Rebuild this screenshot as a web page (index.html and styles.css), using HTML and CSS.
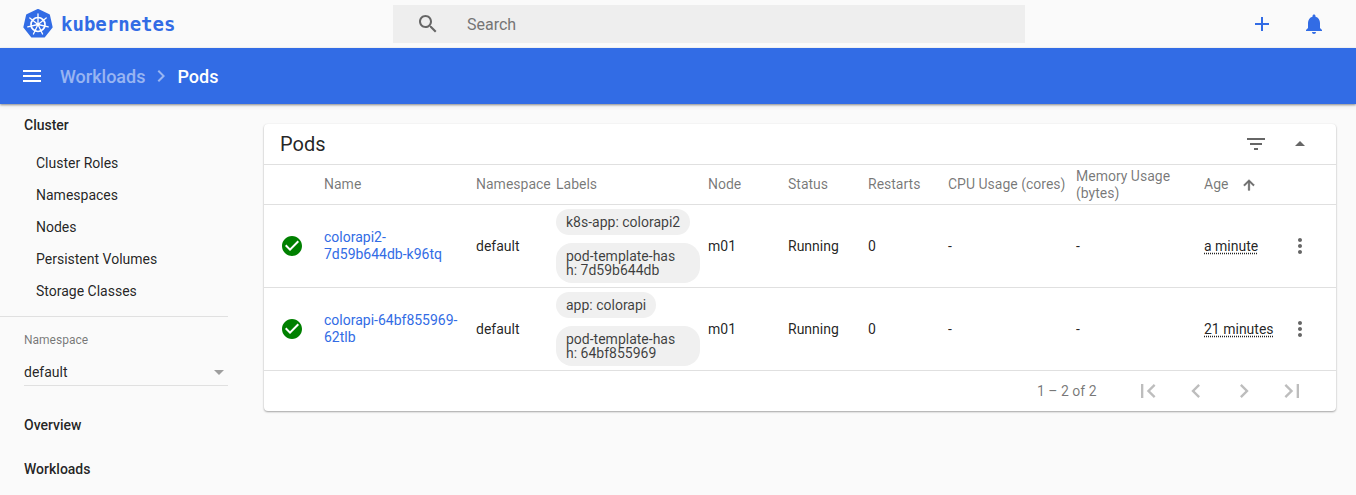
FILE: index.html
```html
<!DOCTYPE html>
<html lang="en">
<head>
    <meta charset="UTF-8">
    <meta name="viewport" content="width=device-width, initial-scale=1.0">
    <title>Pods - Kubernetes Dashboard</title>
    <link rel="stylesheet" href="styles.css">
</head>
<body>
    <svg class="sprites" xmlns="http://www.w3.org/2000/svg">
        <symbol id="i-search" viewBox="0 0 24 24"><path d="M15.5 14h-.79l-.28-.27C15.41 12.59 16 11.11 16 9.5 16 5.91 13.09 3 9.5 3S3 5.91 3 9.5 5.91 16 9.5 16c1.61 0 3.09-.59 4.23-1.57l.27.28v.79l5 4.99L20.49 19l-4.99-5zm-6 0C7.01 14 5 11.99 5 9.5S7.01 5 9.5 5 14 7.01 14 9.5 11.99 14 9.5 14z"/></symbol>
        <symbol id="i-add" viewBox="0 0 24 24"><path d="M19 13h-6v6h-2v-6H5v-2h6V5h2v6h6v2z"/></symbol>
        <symbol id="i-bell" viewBox="0 0 24 24"><path d="M12 22c1.1 0 2-.9 2-2h-4c0 1.1.89 2 2 2zm6-6v-5c0-3.07-1.64-5.64-4.5-6.32V4c0-.83-.67-1.5-1.5-1.5s-1.5.67-1.5 1.5v.68C7.63 5.36 6 7.92 6 11v5l-2 2v1h16v-1l-2-2z"/></symbol>
        <symbol id="i-menu" viewBox="0 0 24 24"><path d="M3 18h18v-2H3v2zm0-5h18v-2H3v2zm0-7v2h18V6H3z"/></symbol>
        <symbol id="i-filter" viewBox="0 0 24 24"><path d="M10 18h4v-2h-4v2zM3 6v2h18V6H3zm3 7h12v-2H6v2z"/></symbol>
        <symbol id="i-drop-up" viewBox="0 0 24 24"><path d="M7 14l5-5 5 5z"/></symbol>
        <symbol id="i-check" viewBox="0 0 24 24"><path d="M12 2C6.48 2 2 6.48 2 12s4.48 10 10 10 10-4.48 10-10S17.52 2 12 2zm-2 15l-5-5 1.41-1.41L10 14.17l7.59-7.59L19 8l-9 9z"/></symbol>
        <symbol id="i-more" viewBox="0 0 24 24"><path d="M12 8c1.1 0 2-.9 2-2s-.9-2-2-2-2 .9-2 2 .9 2 2 2zm0 2c-1.1 0-2 .9-2 2s.9 2 2 2 2-.9 2-2-.9-2-2-2zm0 6c-1.1 0-2 .9-2 2s.9 2 2 2 2-.9 2-2-.9-2-2-2z"/></symbol>
        <symbol id="i-first" viewBox="0 0 24 24"><path d="M18.41 16.59L13.82 12l4.59-4.59L17 6l-6 6 6 6zM6 6h2v12H6z"/></symbol>
        <symbol id="i-prev" viewBox="0 0 24 24"><path d="M15.41 7.41L14 6l-6 6 6 6 1.41-1.41L10.83 12z"/></symbol>
        <symbol id="i-next" viewBox="0 0 24 24"><path d="M10 6L8.59 7.41 13.17 12l-4.58 4.59L10 18l6-6z"/></symbol>
        <symbol id="i-last" viewBox="0 0 24 24"><path d="M5.59 7.41L10.18 12l-4.59 4.59L7 18l6-6-6-6zM16 6h2v12h-2z"/></symbol>
        <symbol id="i-up" viewBox="0 0 24 24"><path d="M4 12l1.41 1.41L11 7.83V20h2V7.83l5.58 5.59L20 12l-8-8-8 8z"/></symbol>
    </svg>

    <header class="toolbar">
        <div class="brand">
            <svg class="logo" viewBox="0 0 32 32">
                <polygon class="logo-bg" points="16,2 26.95,7.27 29.65,19.12 22.07,28.61 9.93,28.61 2.35,19.12 5.05,7.27"/>
                <circle class="logo-ring" cx="16" cy="16.5" r="7"/>
                <circle class="logo-hub" cx="16" cy="16.5" r="1.7"/>
                <g class="logo-spokes">
                    <line x1="16" y1="16.5" x2="16" y2="6"/>
                    <line x1="16" y1="16.5" x2="16" y2="6" transform="rotate(51.4 16 16.5)"/>
                    <line x1="16" y1="16.5" x2="16" y2="6" transform="rotate(102.9 16 16.5)"/>
                    <line x1="16" y1="16.5" x2="16" y2="6" transform="rotate(154.3 16 16.5)"/>
                    <line x1="16" y1="16.5" x2="16" y2="6" transform="rotate(205.7 16 16.5)"/>
                    <line x1="16" y1="16.5" x2="16" y2="6" transform="rotate(257.1 16 16.5)"/>
                    <line x1="16" y1="16.5" x2="16" y2="6" transform="rotate(308.6 16 16.5)"/>
                </g>
            </svg>
            <span class="brand-name">kubernetes</span>
        </div>
        <div class="search">
            <svg class="icon search-icon"><use href="#i-search"/></svg>
            <span class="search-text">Search</span>
        </div>
        <div class="toolbar-actions">
            <svg class="icon"><use href="#i-add"/></svg>
            <svg class="icon"><use href="#i-bell"/></svg>
        </div>
    </header>

    <div class="actionbar">
        <svg class="icon menu-icon"><use href="#i-menu"/></svg>
        <span class="crumb">Workloads</span>
        <svg class="icon crumb-sep"><use href="#i-next"/></svg>
        <span class="crumb crumb-current">Pods</span>
    </div>

    <div class="layout">
        <nav class="sidebar">
            <div class="nav-title nav-title-first">Cluster</div>
            <a class="nav-item">Cluster Roles</a>
            <a class="nav-item">Namespaces</a>
            <a class="nav-item">Nodes</a>
            <a class="nav-item">Persistent Volumes</a>
            <a class="nav-item">Storage Classes</a>
            <hr class="nav-divider">
            <div class="ns-label">Namespace</div>
            <div class="ns-select">
                <span>default</span>
                <span class="ns-arrow"></span>
            </div>
            <div class="nav-title">Overview</div>
            <div class="nav-title">Workloads</div>
        </nav>

        <main class="content">
            <section class="card">
                <div class="card-title">
                    <h1>Pods</h1>
                    <svg class="icon filter-icon"><use href="#i-filter"/></svg>
                    <svg class="icon collapse-icon"><use href="#i-drop-up"/></svg>
                </div>
                <table class="pods">
                    <colgroup>
                        <col class="c-state"><col class="c-name"><col class="c-ns"><col class="c-labels"><col class="c-node">
                        <col class="c-status"><col class="c-restarts"><col class="c-cpu"><col class="c-mem"><col class="c-age"><col class="c-menu">
                    </colgroup>
                    <thead>
                        <tr>
                            <th></th>
                            <th>Name</th>
                            <th>Namespace</th>
                            <th>Labels</th>
                            <th>Node</th>
                            <th>Status</th>
                            <th>Restarts</th>
                            <th>CPU Usage (cores)</th>
                            <th>Memory Usage (bytes)</th>
                            <th><span class="sorted">Age <svg class="icon sort-icon"><use href="#i-up"/></svg></span></th>
                            <th></th>
                        </tr>
                    </thead>
                    <tbody>
                        <tr>
                            <td class="state"><svg class="icon check-icon"><use href="#i-check"/></svg></td>
                            <td><a class="pod-link">colorapi2-7d59b644db-k96tq</a></td>
                            <td>default</td>
                            <td>
                                <span class="chip">k8s-app: colorapi2</span>
                                <span class="chip chip-long">pod-template-hash: 7d59b644db</span>
                            </td>
                            <td>m01</td>
                            <td>Running</td>
                            <td>0</td>
                            <td>-</td>
                            <td>-</td>
                            <td><span class="age">a minute</span></td>
                            <td class="row-menu"><svg class="icon more-icon"><use href="#i-more"/></svg></td>
                        </tr>
                        <tr>
                            <td class="state"><svg class="icon check-icon"><use href="#i-check"/></svg></td>
                            <td><a class="pod-link">colorapi-64bf855969-62tlb</a></td>
                            <td>default</td>
                            <td>
                                <span class="chip">app: colorapi</span>
                                <span class="chip chip-long">pod-template-hash: 64bf855969</span>
                            </td>
                            <td>m01</td>
                            <td>Running</td>
                            <td>0</td>
                            <td>-</td>
                            <td>-</td>
                            <td><span class="age">21 minutes</span></td>
                            <td class="row-menu"><svg class="icon more-icon"><use href="#i-more"/></svg></td>
                        </tr>
                    </tbody>
                </table>
                <div class="pager">
                    <span class="pager-range">1 – 2 of 2</span>
                    <svg class="icon pager-icon"><use href="#i-first"/></svg>
                    <svg class="icon pager-icon"><use href="#i-prev"/></svg>
                    <svg class="icon pager-icon"><use href="#i-next"/></svg>
                    <svg class="icon pager-icon"><use href="#i-last"/></svg>
                </div>
            </section>
        </main>
    </div>
</body>
</html>
```

FILE: styles.css
```css
* {
    box-sizing: border-box;
}
html, body {
    height: 100%;
}
body {
    margin: 0;
    overflow: hidden;
    background-color: #fafafa;
    color: rgba(0, 0, 0, 0.87);
    font-family: Roboto, "Liberation Sans", sans-serif;
    font-size: 14px;
}
.sprites {
    display: none;
}
.icon {
    display: block;
    width: 24px;
    height: 24px;
    flex: none;
    fill: currentColor;
}

/* top toolbar */
.toolbar {
    display: flex;
    align-items: center;
    height: 48px;
    padding: 0 30px 0 22px;
}
.brand {
    display: flex;
    align-items: center;
    width: 371px;
}
.logo {
    width: 32px;
    height: 32px;
    margin-right: 7px;
}
.logo-bg {
    fill: #326ce5;
    stroke: #326ce5;
    stroke-width: 2;
    stroke-linejoin: round;
}
.logo-ring {
    fill: none;
    stroke: #fff;
    stroke-width: 1.7;
}
.logo-hub {
    fill: #fff;
}
.logo-spokes line {
    stroke: #fff;
    stroke-width: 1.3;
    stroke-linecap: round;
}
.brand-name {
    color: #326ce5;
    font-family: "DejaVu Sans Mono", "Liberation Mono", monospace;
    font-size: 19px;
    font-weight: 700;
}
.search {
    display: flex;
    align-items: center;
    width: 632px;
    height: 38px;
    padding-left: 23px;
    background-color: #eee;
}
.search-icon {
    color: #666;
}
.search-text {
    margin-left: 27px;
    color: #757575;
    font-size: 16px;
}
.toolbar-actions {
    display: flex;
    gap: 28px;
    margin-left: auto;
    color: #326ce5;
}

/* blue bar */
.actionbar {
    position: relative;
    display: flex;
    align-items: center;
    height: 56px;
    padding-left: 20px;
    background-color: #326ce5;
    box-shadow: 0 1px 2px rgba(0, 0, 0, 0.4), 0 2px 5px rgba(0, 0, 0, 0.08);
    color: #fff;
}
.menu-icon {
    margin-right: 16px;
}
.crumb {
    color: rgba(255, 255, 255, 0.5);
    font-size: 18px;
    font-weight: 500;
}
.crumb-current {
    color: #fff;
}
.crumb-sep {
    margin: 0 4px;
    color: rgba(255, 255, 255, 0.5);
}

/* sidebar + content */
.layout {
    display: flex;
}
.sidebar {
    flex: none;
    width: 256px;
    padding-right: 28px;
}
.nav-title {
    display: flex;
    align-items: center;
    height: 44px;
    padding-left: 24px;
    color: rgba(0, 0, 0, 0.87);
    font-weight: 500;
}
.nav-title-first {
    height: 43px;
    padding-bottom: 2px;
}
.nav-item {
    display: flex;
    align-items: center;
    height: 32px;
    padding-left: 36px;
}
.nav-divider {
    height: 1px;
    margin: 9px 0 0;
    border: none;
    background-color: #e0e0e0;
}
.ns-label {
    margin: 16px 0 0 24px;
    color: rgba(0, 0, 0, 0.54);
    font-size: 12px;
    line-height: 14px;
}
.ns-select {
    display: flex;
    align-items: center;
    justify-content: space-between;
    height: 27px;
    margin: 12px 0 17px 24px;
    padding-right: 4px;
    border-bottom: 1px solid #e0e0e0;
}
.ns-arrow {
    border-top: 5px solid #9e9e9e;
    border-right: 5px solid transparent;
    border-left: 5px solid transparent;
}
.content {
    flex: 1;
    padding: 20px 20px 0 8px;
}

/* pods card */
.card {
    border-radius: 4px;
    background-color: #fff;
    box-shadow: 0 1px 2px rgba(0, 0, 0, 0.35), 0 0 2px rgba(0, 0, 0, 0.04);
}
.card-title {
    display: flex;
    align-items: center;
    height: 41px;
    padding: 0 24px 0 16px;
    border-bottom: 1px solid #e0e0e0;
}
.card-title h1 {
    flex: 1;
    margin: 0;
    font-size: 20px;
    font-weight: 400;
}
.filter-icon, .collapse-icon {
    color: #666;
}
.collapse-icon {
    margin-left: 20px;
}
.pods {
    width: 100%;
    table-layout: fixed;
    border-collapse: separate;
    border-spacing: 0;
}
.c-state { width: 60px; }
.c-name { width: 152px; }
.c-ns { width: 80px; }
.c-labels { width: 152px; }
.c-node, .c-status, .c-restarts { width: 80px; }
.c-cpu, .c-mem { width: 128px; }
.c-age { width: 80px; }
.pods th, .pods td {
    padding: 4px 8px 4px 0;
    border-bottom: 1px solid #e0e0e0;
    line-height: 17px;
    text-align: left;
    vertical-align: middle;
}
.pods th {
    height: 40px;
    padding-top: 0;
    padding-bottom: 0;
    color: rgba(0, 0, 0, 0.54);
    font-weight: 400;
}
.pods td.state {
    padding-left: 16px;
}
.check-icon {
    color: #008000;
}
.pod-link {
    color: #326ce5;
}
.sorted {
    display: flex;
    align-items: center;
    gap: 13px;
}
.sort-icon {
    width: 16px;
    height: 16px;
    color: #666;
    stroke: #666;
    stroke-width: 1;
}
.chip {
    display: block;
    width: fit-content;
    max-width: 144px;
    padding: 6px 10px;
    border-radius: 16px;
    background-color: #f0f0f0;
    color: rgba(0, 0, 0, 0.75);
    line-height: 14px;
    word-break: break-all;
}
.chip-long {
    padding-right: 14px;
}
.chip + .chip {
    margin-top: 8px;
}
.age {
    text-decoration: underline dotted;
    text-underline-offset: 2px;
    white-space: nowrap;
}
.row-menu .more-icon {
    margin-left: 4px;
    color: #666;
}
.pager {
    display: flex;
    align-items: center;
    height: 40px;
    padding-left: 773px;
}
.pager-range {
    width: 97px;
    color: rgba(0, 0, 0, 0.54);
}
.pager-icon {
    width: 28px;
    height: 28px;
    margin-right: 20px;
    color: #bdbdbd;
}
```
